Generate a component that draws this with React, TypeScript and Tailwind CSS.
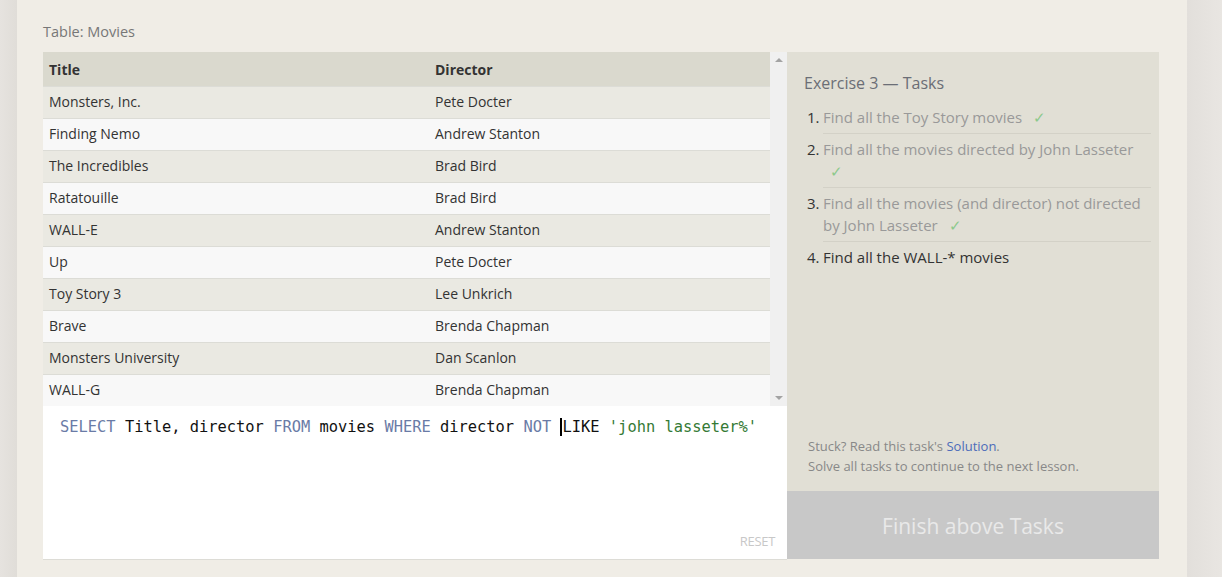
const movies = [
  ['Monsters, Inc.', 'Pete Docter'],
  ['Finding Nemo', 'Andrew Stanton'],
  ['The Incredibles', 'Brad Bird'],
  ['Ratatouille', 'Brad Bird'],
  ['WALL-E', 'Andrew Stanton'],
  ['Up', 'Pete Docter'],
  ['Toy Story 3', 'Lee Unkrich'],
  ['Brave', 'Brenda Chapman'],
  ['Monsters University', 'Dan Scanlon'],
  ['WALL-G', 'Brenda Chapman'],
]

const tasks = [
  { text: 'Find all the Toy Story movies', done: true },
  { text: 'Find all the movies directed by John Lasseter', done: true },
  { text: 'Find all the movies (and director) not directed by John Lasseter', done: true },
  { text: 'Find all the WALL-* movies', done: false },
]

function Check() {
  return <span className="ml-[7px] text-[#8cc98c]">✓</span>
}

export default function App() {
  return (
    <div className="flex h-[577px] w-[1222px] overflow-hidden bg-[#e6e3df] font-['Open_Sans',sans-serif]">
      <div className="w-[17px] shrink-0 bg-gradient-to-r from-[#e6e3df] to-[#e0ddd8]" />
      <div className="flex w-[1170px] shrink-0 flex-col bg-[#f0ede6] pl-[26px] pr-[28px] pt-[21px]">
        <div className="h-[31px] text-[14.5px] text-[#777]">Table: Movies</div>
        <div className="flex">
          {/* left: table + editor */}
          <div className="flex w-[744px] flex-col">
            <div className="flex h-[354px]">
              <table className="w-[727px] border-collapse text-[14px] text-[#333]">
                <thead>
                  <tr className="h-[34px] bg-[#dad9ce]">
                    <th className="w-[386px] pl-[6px] pt-[2px] text-left font-bold">Title</th>
                    <th className="pl-[6px] pt-[2px] text-left font-bold">Director</th>
                  </tr>
                </thead>
                <tbody>
                  {movies.map(([title, dir], i) => (
                    <tr
                      key={title}
                      className={`h-[32px] border-t border-[#dcdcd6] ${i % 2 === 0 ? 'bg-[#eae9e2]' : 'bg-[#f8f8f8]'}`}
                    >
                      <td className="pb-[1px] pl-[6px]">{title}</td>
                      <td className="pb-[1px] pl-[6px]">{dir}</td>
                    </tr>
                  ))}
                </tbody>
              </table>
              <div className="flex w-[17px] flex-col items-center justify-between bg-[#f0f0f0] py-[6px]">
                <div className="h-0 w-0 border-x-[4px] border-b-[4px] border-x-transparent border-b-[#a3a3a3]" />
                <div className="h-0 w-0 border-x-[4px] border-t-[4px] border-x-transparent border-t-[#a3a3a3]" />
              </div>
            </div>
            <div className="relative h-[154px] border-b border-[#dddcd6] bg-white pl-[17px] pt-[10px]">
              <div className="font-['DejaVu_Sans_Mono',monospace] text-[15.4px] leading-[22px] text-[#111]">
                <span className="text-[#6a7ba6]">SELECT</span> Title, director <span className="text-[#6a7ba6]">FROM</span> movies{' '}
                <span className="text-[#6a7ba6]">WHERE</span> director <span className="text-[#6a7ba6]">NOT</span>{' '}
                <span className="border-l-2 border-black">LIKE</span>{' '}
                <span className="text-[#357a35]">'john lasseter%'</span>
              </div>
              <div className="absolute bottom-[8px] right-[12px] text-[13px] tracking-[-0.3px] text-[#c8c8c8]">RESET</div>
            </div>
          </div>
          {/* right: tasks */}
          <div className="flex w-[372px] flex-col">
            <div className="flex h-[439px] flex-col bg-[#e1dfd5] pl-[17px] pr-[8px] pt-[20px]">
              <div className="text-[16px] leading-[22px] text-[#6b6e76]">Exercise 3 — Tasks</div>
              <ol className="mt-[8px] text-[15px] leading-[22px]">
                {tasks.map((t, i) => (
                  <li key={t.text} className="flex pl-[3px]">
                    <span className="w-[16px] shrink-0 pt-[4px] text-[#333]">{i + 1}.</span>
                    <div
                      className={`flex-1 pb-[5px] pt-[4px] ${i < tasks.length - 1 ? 'border-b border-[#d3d1c7]' : ''} ${t.done ? 'text-[#999]' : 'text-[#333]'}`}
                    >
                      {t.text}
                      {t.done && ' '}
                      {t.done && <Check />}
                    </div>
                  </li>
                ))}
              </ol>
              <div className="mt-auto pb-[15px] pl-[4px] text-[13px] leading-[20px] text-[#888]">
                <div>
                  Stuck? Read this task's <span className="text-[#4c6cba]">Solution</span>.
                </div>
                <div>Solve all tasks to continue to the next lesson.</div>
              </div>
            </div>
            <div className="flex h-[68px] items-center justify-center bg-[#c8c8c8] pt-[3px] text-[21px] text-[#e9e9e9]">
              Finish above Tasks
            </div>
          </div>
        </div>
      </div>
      <div className="flex-1 bg-gradient-to-r from-[#e2dfdb] to-[#e9e6e2]" />
    </div>
  )
}
